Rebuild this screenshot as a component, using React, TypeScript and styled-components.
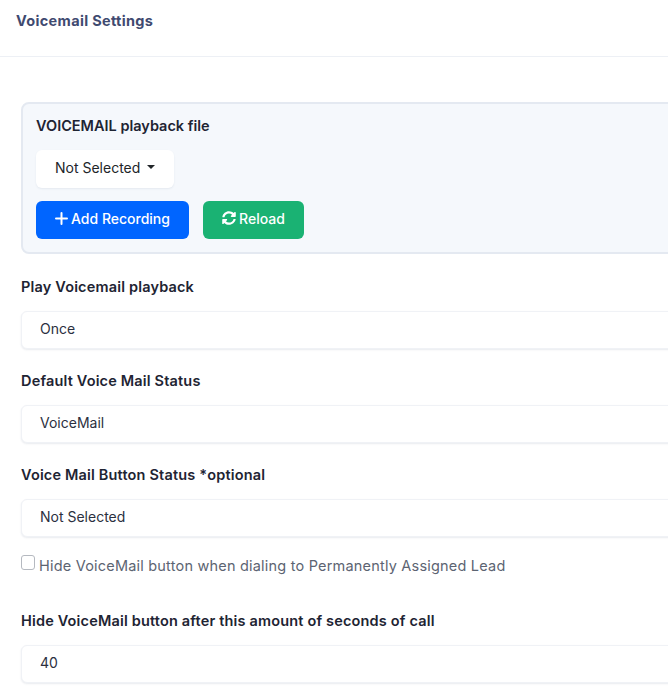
import React from "react";
import styled, { createGlobalStyle } from "styled-components";

const Global = createGlobalStyle`
  html, body { margin: 0; padding: 0; background: #fff; overflow: hidden; }
  body { font-family: Inter, "Liberation Sans", sans-serif; font-size: 14px; color: #212529; }
`;

const Page = styled.div`
  width: 668px;
  height: 690px;
  overflow: hidden;
`;

const Header = styled.header`
  height: 57px;
  box-sizing: border-box;
  border-bottom: 1px solid #edf0f5;
  padding: 12px 16px 0;
`;

const Title = styled.h1`
  margin: 0;
  font-size: 14.5px;
  line-height: 18px;
  letter-spacing: 0.33px;
  font-weight: 700;
  color: #3f4a70;
`;

const Body = styled.main`
  width: 780px;
  padding: 45px 0 0 21px;
`;

const Panel = styled.section`
  box-sizing: border-box;
  height: 152px;
  background: #f5f8fc;
  border: 2px solid #e4e9f1;
  border-radius: 8px;
  padding: 12px 13px 13px;
  margin-bottom: 23px;
`;

const PanelTitle = styled.div`
  font-size: 14.5px;
  line-height: 20px;
  font-weight: 600;
  color: #1e2433;
  margin-bottom: 14px;
`;

const Dropdown = styled.button`
  display: flex;
  align-items: center;
  gap: 7px;
  box-sizing: border-box;
  width: 138px;
  height: 38px;
  padding: 0 0 4px 19px;
  border: 0;
  border-radius: 6px;
  background: #fff;
  box-shadow: 0 1px 2px rgba(40, 60, 100, 0.08);
  font: inherit;
  color: #212529;
  margin-bottom: 13px;
`;

const Caret = styled.span`
  width: 0;
  height: 0;
  border-left: 4px solid transparent;
  border-right: 4px solid transparent;
  border-top: 4px solid #212529;
`;

const Actions = styled.div`
  display: flex;
  gap: 14px;
`;

const ActionButton = styled.button<{ $bg: string; $w: number }>`
  display: flex;
  align-items: center;
  justify-content: center;
  gap: 3px;
  box-sizing: border-box;
  width: ${(p) => p.$w}px;
  height: 38px;
  border: 0;
  border-radius: 6px;
  background: ${(p) => p.$bg};
  color: #fff;
  font: inherit;
  font-weight: 500;
  padding: 0 0 4px;
`;

const Field = styled.div`
  margin-bottom: 22px;
`;

const Label = styled.label`
  display: block;
  font-size: 14.5px;
  line-height: 20px;
  letter-spacing: 0.17px;
  font-weight: 600;
  color: #1e2433;
  margin-bottom: 14px;
`;

const Control = styled.div`
  box-sizing: border-box;
  height: 38px;
  display: flex;
  align-items: center;
  padding: 0 0 4px 18px;
  background: #fff;
  border: 1px solid #f0f2f6;
  border-radius: 6px;
  box-shadow: 0 1px 2px rgba(40, 60, 100, 0.1);
  color: #2b3040;
`;

const CheckRow = styled.div`
  display: flex;
  align-items: flex-start;
  gap: 4px;
  margin: -4px 0 34px;
  height: 22px;
`;

const Box = styled.span`
  box-sizing: border-box;
  width: 14px;
  height: 15px;
  background: #fff;
  border: 1px solid #b5b9c0;
  border-radius: 3px;
`;

const CheckText = styled.span`
  font-size: 14.5px;
  line-height: 22px;
  letter-spacing: 0.2px;
  color: #5c6472;
`;

const PlusIcon = () => (
  <svg width="13" height="13" viewBox="0 0 13 13" aria-hidden="true">
    <path d="M6.5 1v11M1 6.5h11" stroke="#fff" strokeWidth="2" strokeLinecap="round" />
  </svg>
);

const SyncIcon = () => (
  <svg width="14" height="14" viewBox="0 0 512 512" fill="#fff" aria-hidden="true">
    <path d="M370.7 133.3C339.5 104 298.9 88 255.800 88c-77.500.1-144.300 53.200-162.800 126.900-1.300 5.400-6.100 9.100-11.600 9.100H24.100c-7.500 0-13.200-6.800-11.800-14.200C33.900 94.900 134.800 8 256 8c66.400 0 126.800 26.100 171.300 68.700L463 41C478.100 25.900 504 36.600 504 57.900V192c0 13.300-10.700 24-24 24H345.900c-21.400 0-32.100-25.900-17-41l41.800-41.700zM32 296h134.100c21.400 0 32.100 25.900 17 41l-41.800 41.800c31.300 29.300 71.800 45.300 114.900 45.200 77.400-.1 144.300-53.100 162.800-126.800 1.300-5.400 6.100-9.100 11.600-9.100h57.300c7.500 0 13.200 6.800 11.800 14.200C478.100 417.100 377.200 504 256 504c-66.400 0-126.800-26.100-171.300-68.700L49 471C33.900 486.100 8 475.400 8 454.100V320c0-13.300 10.700-24 24-24z" />
  </svg>
);

export default function App() {
  return (
    <Page>
      <Global />
      <Header>
        <Title>Voicemail Settings</Title>
      </Header>
      <Body>
        <Panel>
          <PanelTitle>VOICEMAIL playback file</PanelTitle>
          <Dropdown>
            Not Selected <Caret />
          </Dropdown>
          <Actions>
            <ActionButton $bg="#0065ff" $w={153}>
              <PlusIcon /> Add Recording
            </ActionButton>
            <ActionButton $bg="#1ab273" $w={101}>
              <SyncIcon /> Reload
            </ActionButton>
          </Actions>
        </Panel>
        <Field>
          <Label>Play Voicemail playback</Label>
          <Control>Once</Control>
        </Field>
        <Field>
          <Label>Default Voice Mail Status</Label>
          <Control>VoiceMail</Control>
        </Field>
        <Field>
          <Label>Voice Mail Button Status *optional</Label>
          <Control>Not Selected</Control>
        </Field>
        <CheckRow>
          <Box />
          <CheckText>Hide VoiceMail button when dialing to Permanently Assigned Lead</CheckText>
        </CheckRow>
        <Field>
          <Label>Hide VoiceMail button after this amount of seconds of call</Label>
          <Control>40</Control>
        </Field>
      </Body>
    </Page>
  );
}
